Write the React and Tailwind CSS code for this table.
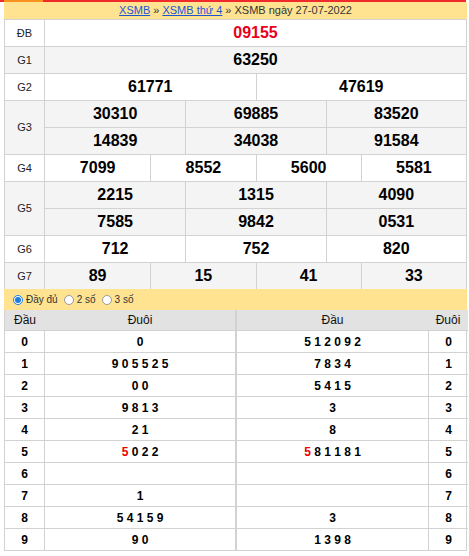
import React from 'react';

const prizes = [
  { label: 'ĐB', rows: [['09155']], red: true },
  { label: 'G1', rows: [['63250']] },
  { label: 'G2', rows: [['61771', '47619']] },
  { label: 'G3', rows: [['30310', '69885', '83520'], ['14839', '34038', '91584']] },
  { label: 'G4', rows: [['7099', '8552', '5600', '5581']] },
  { label: 'G5', rows: [['2215', '1315', '4090'], ['7585', '9842', '0531']] },
  { label: 'G6', rows: [['712', '752', '820']] },
  { label: 'G7', rows: [['89', '15', '41', '33']] },
];

const colsClass = {
  1: 'grid-cols-1',
  2: 'grid-cols-2',
  3: 'grid-cols-3',
  4: 'grid-cols-4',
};

// loto heads / tails, the leading "5" is highlighted in red
const dau = [
  ['0'], ['9 0 5 5 2 5'], ['0 0'], ['9 8 1 3'], ['2 1'],
  ['5', ' 0 2 2'], [''], ['1'], ['5 4 1 5 9'], ['9 0'],
];
const duoi = [
  ['5 1 2 0 9 2'], ['7 8 3 4'], ['5 4 1 5'], ['3'], ['8'],
  ['5', ' 8 1 1 8 1'], [''], [''], ['3'], ['1 3 9 8'],
];

function Cell({ parts }) {
  if (parts.length === 2) {
    return (
      <span>
        <span className="text-[#e00]">{parts[0]}</span>
        {parts[1]}
      </span>
    );
  }
  return <span>{parts[0]}</span>;
}

function Radio({ checked, label }) {
  return (
    <label className="flex items-center gap-[3px] mr-[6px]">
      <span
        className={
          'w-[10px] h-[10px] rounded-full border flex items-center justify-center bg-white ' +
          (checked ? 'border-[#1e7be0]' : 'border-[#9a9a9a]')
        }
      >
        {checked && <span className="w-[6px] h-[6px] rounded-full bg-[#1e7be0]" />}
      </span>
      <span>{label}</span>
    </label>
  );
}

export default function App() {
  return (
    <div className="w-[469px] h-[556px] bg-white text-black" style={{ fontFamily: '"Liberation Sans", Arial, sans-serif' }}>
      <div className="w-[466px] h-[2px] bg-[#f02a2a] flex">
        <div className="ml-[4px] w-[39px] h-[2px] bg-[#f7931e]" />
      </div>
      <div className="ml-[4px] w-[463px]">
        <div className="h-[17px] bg-[#ffe391] flex items-center justify-center text-[11px] text-[#333]">
          <a className="text-[#1a55d6] underline">XSMB</a>
          <span className="mx-[3px]">»</span>
          <a className="text-[#1a55d6] underline">XSMB thứ 4</a>
          <span className="mx-[3px]">»</span>
          <span>XSMB ngày 27-07-2022</span>
        </div>

        <div className="border-l border-r border-[#d2d2d2]">
          {prizes.map((p, i) => (
            <div
              key={p.label}
              className={'flex border-t border-[#d2d2d2] ' + (i % 2 === 1 ? 'bg-[#f4f4f4]' : 'bg-white')}
            >
              <div className="w-[40px] shrink-0 border-r border-[#d2d2d2] flex items-center justify-center text-[11px] text-[#222]">
                {p.label}
              </div>
              <div className="flex-1">
                {p.rows.map((r, j) => (
                  <div
                    key={j}
                    className={'grid ' + colsClass[r.length] + (j > 0 ? ' border-t border-[#d2d2d2]' : '')}
                  >
                    {r.map((n, k) => (
                      <div
                        key={k}
                        className={
                          'h-[26px] flex items-center justify-center text-[16px] font-bold ' +
                          (k > 0 ? 'border-l border-[#d2d2d2] ' : '') +
                          (p.red ? 'text-[#e8001c]' : 'text-black')
                        }
                      >
                        {n}
                      </div>
                    ))}
                  </div>
                ))}
              </div>
            </div>
          ))}
        </div>

        <div className="h-[21px] bg-[#ffe391] flex items-center pl-[9px] text-[10px] text-[#333]">
          <Radio checked label="Đầy đủ" />
          <Radio label="2 số" />
          <Radio label="3 số" />
        </div>

        <div className="grid grid-cols-[232px_231px] border-l border-r border-b border-[#d2d2d2]">
          <div className="border-r-2 border-[#d2d2d2]">
            <div className="flex h-[20px] bg-[#e2e2e2] text-[12px] text-[#111]">
              <div className="w-[40px] flex items-center justify-center">Đầu</div>
              <div className="flex-1 flex items-center justify-center">Đuôi</div>
            </div>
            {dau.map((d, i) => (
              <div key={i} className="flex h-[22px] border-t border-[#d2d2d2] text-[12px] font-bold">
                <div className="w-[40px] border-r border-[#d2d2d2] flex items-center justify-center">{i}</div>
                <div className="flex-1 flex items-center justify-center whitespace-pre">
                  <Cell parts={d} />
                </div>
              </div>
            ))}
          </div>
          <div>
            <div className="flex h-[20px] bg-[#e2e2e2] text-[12px] text-[#111]">
              <div className="flex-1 flex items-center justify-center">Đầu</div>
              <div className="w-[40px] flex items-center justify-center">Đuôi</div>
            </div>
            {duoi.map((d, i) => (
              <div key={i} className="flex h-[22px] border-t border-[#d2d2d2] text-[12px] font-bold">
                <div className="flex-1 flex items-center justify-center whitespace-pre">
                  <Cell parts={d} />
                </div>
                <div className="w-[40px] border-l border-[#d2d2d2] flex items-center justify-center">{i}</div>
              </div>
            ))}
          </div>
        </div>
      </div>
    </div>
  );
}
